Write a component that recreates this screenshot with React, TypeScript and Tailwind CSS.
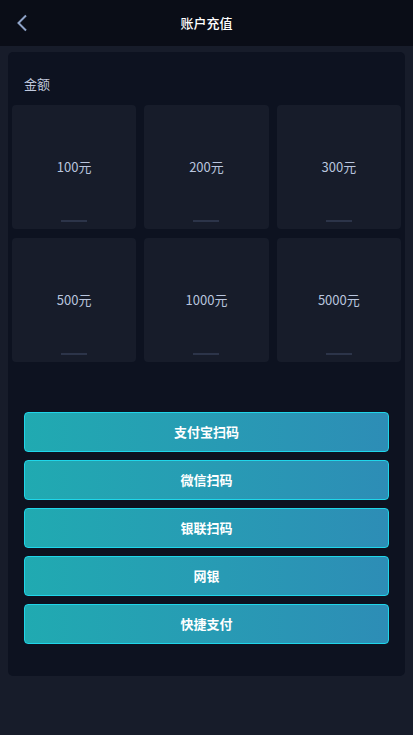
import React from 'react';

const amounts = ['100元', '200元', '300元', '500元', '1000元', '5000元'];
const methods = ['支付宝扫码', '微信扫码', '银联扫码', '网银', '快捷支付'];

const App = () => {
  return (
    <div
      className="min-h-[735px] bg-[#171c2a] text-[13px]"
      style={{ fontFamily: '"Noto Sans CJK SC", "Noto Sans", sans-serif' }}
    >
      <header className="relative h-[46px] bg-[#0a0d17] flex items-center justify-center">
        <button className="absolute left-[14px] top-[13px] w-[16px] h-[20px] flex items-center justify-center">
          <svg width="12" height="18" viewBox="0 0 12 18" fill="none">
            <path d="M10 1.5 L2.5 9 L10 16.5" stroke="#8fa3c8" strokeWidth="2" />
          </svg>
        </button>
        <h1 className="text-white text-[13px] font-medium">账户充值</h1>
      </header>

      <div className="px-2 pt-[6px]">
        <div className="bg-[#0d1220] rounded-[5px] px-1 pt-[20px] pb-[32px]">
          <div className="px-3 text-[#c0c9de] text-[13px] leading-[24px] mb-[9px]">金额</div>

          <div className="grid grid-cols-3 gap-x-2 gap-y-[9px]">
            {amounts.map((a) => (
              <div
                key={a}
                className="relative h-[124px] bg-[#171c2a] rounded-[4px] flex items-center justify-center"
              >
                <span className="text-[#b9c5de] text-[13px]">{a}</span>
                <span className="absolute bottom-[7px] left-1/2 -translate-x-1/2 w-[26px] h-[2px] bg-[#2c3449]" />
              </div>
            ))}
          </div>

          <div className="mt-[50px] px-3 flex flex-col gap-2">
            {methods.map((m) => (
              <button
                key={m}
                className="h-[40px] rounded-[4px] border border-[#1fd6ea] bg-gradient-to-r from-[#20aab1] to-[#2d8db6] text-white font-semibold text-[13px]"
              >
                {m}
              </button>
            ))}
          </div>
        </div>
      </div>
    </div>
  );
};

export default App;
